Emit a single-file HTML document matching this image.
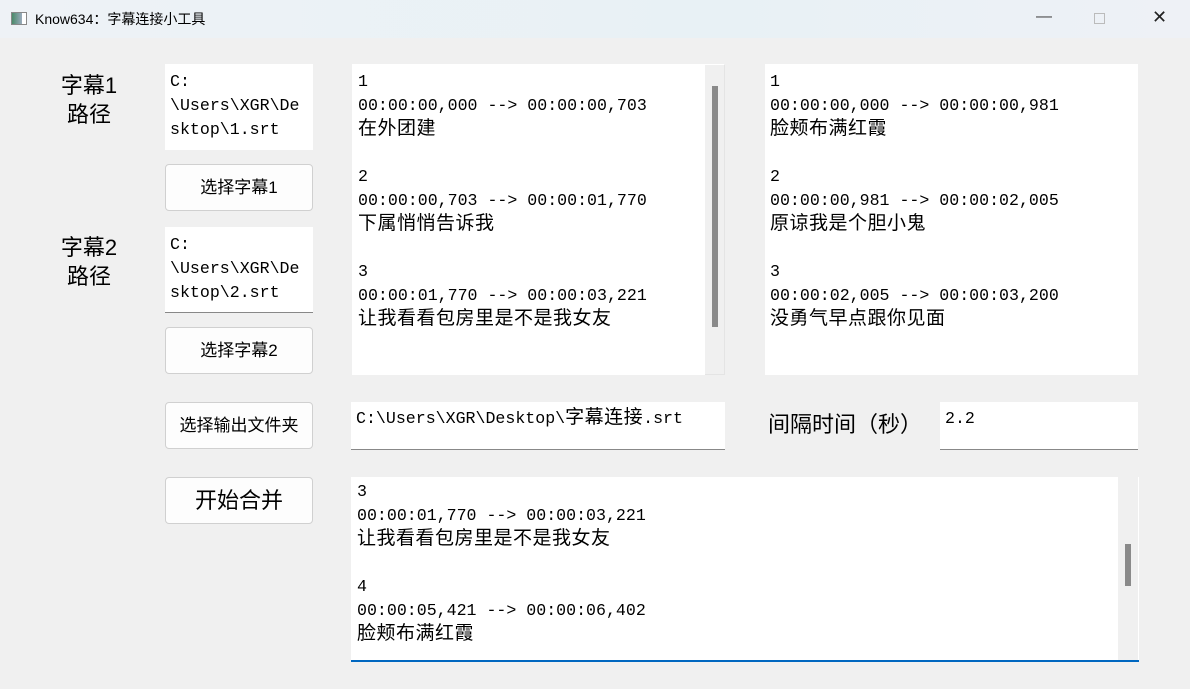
<!DOCTYPE html>
<html><head><meta charset="utf-8"><style>
*{margin:0;padding:0;box-sizing:border-box}
body{width:1190px;height:689px;background:#f0f0f0;position:relative;overflow:hidden;font-family:"Liberation Sans","Noto Sans CJK SC",sans-serif}
.title{position:absolute;left:0;top:0;width:1190px;height:38px;background:linear-gradient(90deg,#eef2f6,#e8f1f5 60%,#eef1f6);}
.title .t{position:absolute;left:35px;top:9px;font-size:14px;color:#000}
.ico{position:absolute;left:11px;top:12px;width:16px;height:13px;border:1px solid #888;background:linear-gradient(90deg,#4a8a6a,#9ab 70%,#fff 72%)}
.wc{position:absolute;top:8px;font-size:16px;color:#444}
.box{position:absolute;background:#fff;font-family:"Liberation Mono","Noto Sans CJK SC",monospace;font-size:16.6px;line-height:23.75px;color:#000;white-space:pre;overflow:hidden}
.box c{font-family:"Noto Sans CJK SC",sans-serif;font-size:19px;line-height:0;letter-spacing:0.5px}
.btn{position:absolute;left:165px;width:148px;height:47px;background:#fdfdfd;border:1px solid #d0d0d0;border-radius:4px;text-align:center;line-height:45px;font-size:17px;font-family:"Liberation Sans","Noto Sans CJK SC",sans-serif}
.lbl{position:absolute;font-size:22px;text-align:center;width:80px;line-height:29px;font-family:"Liberation Sans","Noto Sans CJK SC",sans-serif}
.sb{position:absolute;background:#f0f0f0}
.th{position:absolute;background:#8a8a8a}
</style></head><body>
<div class="title"><div class="ico"></div><div class="t">Know634：字幕连接小工具</div>
<div class="wc" style="left:1036px;font-weight:300">&#8212;</div>
<div class="wc" style="left:1094px;top:13px;width:11px;height:11px;border:1px solid #bbb"></div>
<div class="wc" style="left:1152px;font-size:18px;top:7px;color:#222">&#10005;</div></div>

<div class="lbl" style="left:49px;top:71px">字幕1<br>路径</div>
<div class="lbl" style="left:49px;top:233px">字幕2<br>路径</div>

<div class="box" style="left:165px;top:64px;width:148px;height:86px;padding:6px 0 0 5px">C:
\Users\XGR\De
sktop\1.srt</div>
<div class="btn" style="top:164px">选择字幕1</div>
<div class="box" style="left:165px;top:227px;width:148px;height:86px;padding:6px 0 0 5px;border-bottom:1px solid #888">C:
\Users\XGR\De
sktop\2.srt</div>
<div class="btn" style="top:327px">选择字幕2</div>
<div class="btn" style="top:402px">选择输出文件夹</div>
<div class="btn" style="top:477px;font-size:22px">开始合并</div>

<div class="box" style="left:352px;top:64px;width:373px;height:311px;padding:6px 0 0 6px">1
00:00:00,000 --> 00:00:00,703
<c>在外团建</c>

2
00:00:00,703 --> 00:00:01,770
<c>下属悄悄告诉我</c>

3
00:00:01,770 --> 00:00:03,221
<c>让我看看包房里是不是我女友</c></div>
<div class="sb" style="left:705px;top:64px;width:20px;height:311px;border-top:1px solid #fff;border-right:1px solid #e4e4e4;border-bottom:1px solid #e4e4e4"></div>
<div class="th" style="left:712px;top:86px;width:6px;height:241px"></div>

<div class="box" style="left:765px;top:64px;width:373px;height:311px;padding:6px 0 0 5px">1
00:00:00,000 --> 00:00:00,981
<c>脸颊布满红霞</c>

2
00:00:00,981 --> 00:00:02,005
<c>原谅我是个胆小鬼</c>

3
00:00:02,005 --> 00:00:03,200
<c>没勇气早点跟你见面</c></div>

<div class="box" style="left:351px;top:402px;width:374px;height:48px;padding:5px 0 0 5px;border-bottom:1px solid #888">C:\Users\XGR\Desktop\<c>字幕连接</c>.srt</div>
<div class="lbl" style="left:768px;top:410px;width:160px;text-align:left">间隔时间（秒）</div>
<div class="box" style="left:940px;top:402px;width:198px;height:48px;padding:5px 0 0 5px;border-bottom:1px solid #888">2.2</div>

<div class="box" style="left:351px;top:477px;width:788px;height:185px;padding:3px 0 0 6px;border-bottom:2px solid #0067c0">3
00:00:01,770 --> 00:00:03,221
<c>让我看看包房里是不是我女友</c>

4
00:00:05,421 --> 00:00:06,402
<c>脸颊布满红霞</c></div>
<div class="sb" style="left:1118px;top:477px;width:20px;height:183px"></div>
<div class="th" style="left:1125px;top:544px;width:6px;height:42px"></div>
</body></html>
